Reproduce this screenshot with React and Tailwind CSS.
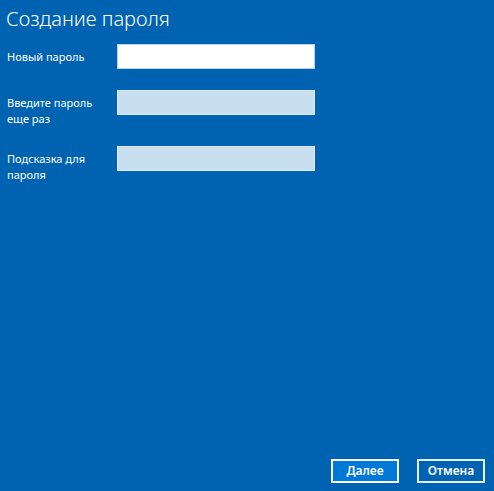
import React from 'react';

const Row = ({ label, active, height }) => (
  <div className={`flex items-start ${height}`}>
    <label className="w-[117px] pl-[7px] pr-2 pt-[5px] text-[11px] leading-[16px] text-white">{label}</label>
    <input
      type="password"
      className={`w-[198px] h-[25px] border outline-none ${active ? 'bg-white border-[#b9d3ea]' : 'bg-[#c8dfef] border-[#dcebf6]'}`}
    />
  </div>
);

export default function App() {
  return (
    <div className="w-[494px] h-[491px] bg-[#0063b1] flex flex-col overflow-hidden" style={{ fontFamily: '"Noto Sans", "Open Sans", sans-serif' }}>
      <h1 className="pl-[6px] pt-[5px] text-[20px] leading-[28px] font-light text-white">Создание пароля</h1>
      <div className="flex flex-col mt-[11px]">
        <Row label="Новый пароль" active height="h-[46px]" />
        <Row label="Введите пароль еще раз" height="h-[56px]" />
        <Row label="Подсказка для пароля" height="h-[56px]" />
      </div>
      <div className="mt-auto flex justify-end gap-[18px] pr-[9px] pb-[8px]">
        <button className="w-[68px] h-[24px] bg-[#0078d7] border-2 border-white text-white text-[12px] font-semibold">Далее</button>
        <button className="w-[68px] h-[24px] bg-[#0063b1] border-2 border-[#e6eef6] text-white text-[12px] font-semibold">Отмена</button>
      </div>
    </div>
  );
}
